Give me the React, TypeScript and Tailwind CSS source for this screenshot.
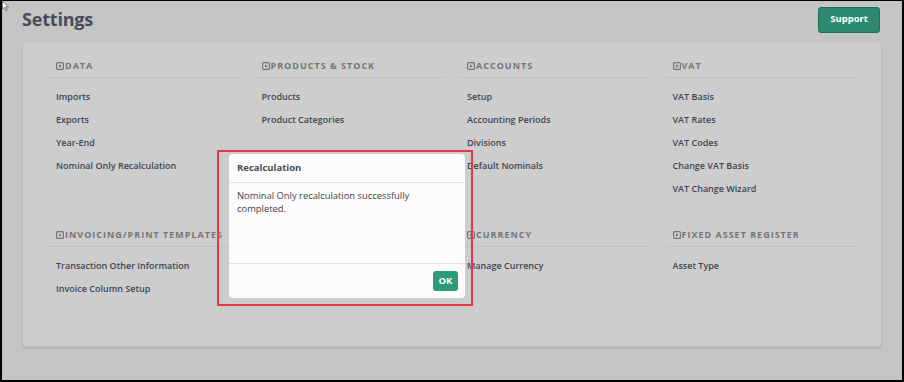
const sections: { title: string; links: string[] }[] = [
  { title: 'Data', links: ['Imports', 'Exports', 'Year-End', 'Nominal Only Recalculation'] },
  { title: 'Products & Stock', links: ['Products', 'Product Categories'] },
  { title: 'Accounts', links: ['Setup', 'Accounting Periods', 'Divisions', 'Default Nominals'] },
  { title: 'VAT', links: ['VAT Basis', 'VAT Rates', 'VAT Codes', 'Change VAT Basis', 'VAT Change Wizard'] },
  { title: 'Invoicing/Print Templates', links: ['Transaction Other Information', 'Invoice Column Setup'] },
  { title: '', links: [] },
  { title: 'Currency', links: ['Manage Currency'] },
  { title: 'Fixed Asset Register', links: ['Asset Type'] },
];

function PlayBox() {
  return (
    <svg width="8" height="8" viewBox="0 0 8 8" className="mr-[1px] shrink-0">
      <rect x="0.6" y="0.6" width="6.8" height="6.8" rx="1" fill="none" stroke="currentColor" strokeWidth="1.2" />
      <path d="M3 2.2 L5.6 4 L3 5.8 Z" fill="currentColor" />
    </svg>
  );
}

function Section({ title, links }: { title: string; links: string[] }) {
  if (!title) return <div />;
  return (
    <div>
      <div className="flex items-center h-[27px] pt-[4px] px-2 border-b border-[#c2c2c2] text-[#757575] text-[9px] font-bold uppercase tracking-[1px] whitespace-nowrap">
        <PlayBox />
        <span>{title}</span>
      </div>
      <ul className="pt-[7px] px-[8px]">
        {links.map((l) => (
          <li key={l} className="h-[23px] flex items-center text-[9px] font-semibold text-[#3f4550] whitespace-nowrap">
            {l}
          </li>
        ))}
      </ul>
    </div>
  );
}

export default function App() {
  return (
    <div className="w-[904px] h-[382px] bg-black pt-[1px] pl-[2px] pr-[2px] pb-[2px]" style={{ fontFamily: '"Open Sans", sans-serif' }}>
      <div className="relative w-full h-full bg-[#c4c4c4] overflow-hidden">
        {/* cursor */}
        <svg className="absolute left-0 top-0" width="7" height="10" viewBox="0 0 7 10">
          <path d="M0.5 0.5 L0.5 8 L2.5 6.2 L4 9.5 L5.2 9 L3.8 5.8 L6.5 5.8 Z" fill="#fff" stroke="#555" strokeWidth="0.7" />
        </svg>

        <div className="flex items-center justify-between pl-[20px] pr-[22px] pt-[5px]">
          <h1 className="text-[18px] font-bold text-[#474d57] tracking-[-0.2px]">Settings</h1>
          <button className="h-[26px] px-[11px] rounded-[3px] bg-[#2d8a6f] border border-[#237058] text-white text-[9.5px] font-bold">
            Support
          </button>
        </div>

        <div className="mx-[20px] mt-[8px] h-[306px] rounded-[4px] bg-[#cdcdcd] border border-[#c0c0c0] shadow-[0_2px_1px_rgba(0,0,0,0.08)] px-[25px] pt-[9px]">
          <div className="grid grid-cols-4 gap-x-[14px] gap-y-[20px]">
            {sections.map((s, i) => (
              <Section key={i} title={s.title} links={s.links} />
            ))}
          </div>
        </div>

        {/* highlight */}
        <div className="absolute left-[215px] top-[149px] w-[256px] h-[156px] border-2 border-[#e5393f]" />

        {/* dialog */}
        <div className="absolute left-[227px] top-[153px] w-[236px] h-[144px] rounded-[4px] bg-[#fdfbfb] flex flex-col">
          <div className="h-[29px] flex items-center px-[8px] border-b border-[#e6e2e2] text-[9.5px] font-bold text-[#464b55]">
            Recalculation
          </div>
          <div className="flex-1 px-[8px] pt-[6px] text-[9.4px] leading-[13px] text-[#3f4550]">
            Nominal Only recalculation successfully completed.
          </div>
          <div className="h-[35px] border-t border-[#e6e2e2] flex items-center justify-end px-[7px]">
            <button className="h-[20px] w-[25px] rounded-[3px] bg-[#2d9a7b] text-white text-[9.5px] font-bold">OK</button>
          </div>
        </div>
      </div>
    </div>
  );
}
